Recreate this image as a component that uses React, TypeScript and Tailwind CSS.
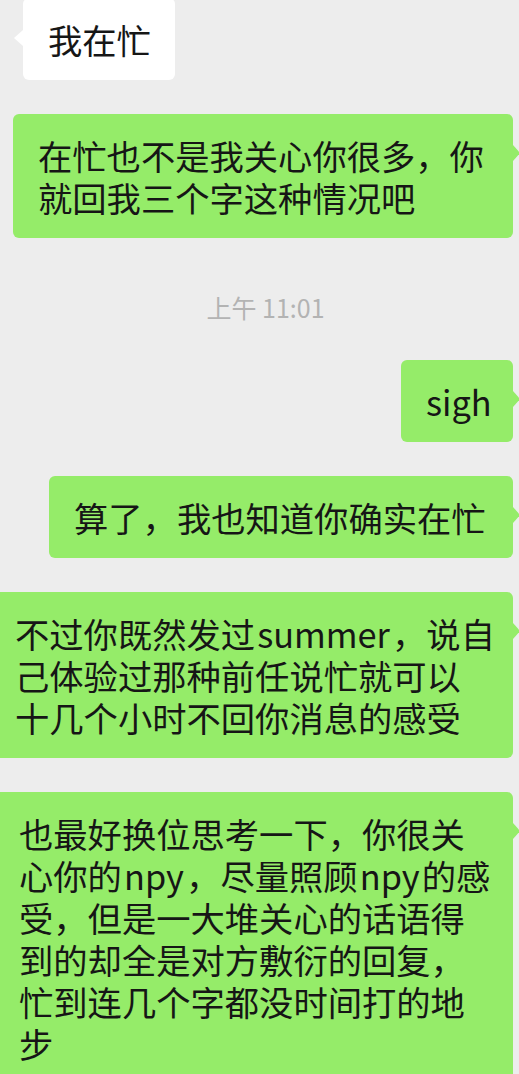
import React from 'react';

type Msg =
  | { kind: 'in'; lines: string[]; width: string }
  | { kind: 'out'; lines: string[]; width: string }
  | { kind: 'time'; text: string };

// \u200a = hair space, gives the small gap iOS puts between latin and chinese
const messages: Msg[] = [
  { kind: 'in', lines: ['我在忙'], width: 'w-[152px]' },
  { kind: 'out', lines: ['在忙也不是我关心你很多，你', '就回我三个字这种情况吧'], width: 'w-[500px]' },
  { kind: 'time', text: '上午 11:01' },
  { kind: 'out', lines: ['sigh'], width: 'w-[112px]' },
  { kind: 'out', lines: ['算了，我也知道你确实在忙'], width: 'w-[464px]' },
  {
    kind: 'out',
    lines: ['不过你既然发过\u200asummer\u200a，说自', '己体验过那种前任说忙就可以', '十几个小时不回你消息的感受'],
    width: 'w-[523px]',
  },
  {
    kind: 'out',
    lines: [
      '也最好换位思考一下，你很关',
      '心你的\u200anpy\u200a，尽量照顾\u200anpy\u200a的感',
      '受，但是一大堆关心的话语得',
      '到的却全是对方敷衍的回复，',
      '忙到连几个字都没时间打的地',
      '步',
    ],
    width: 'w-[519px]',
  },
];

function Bubble({ lines, width, incoming }: { lines: string[]; width: string; incoming: boolean }) {
  return (
    <div
      className={`relative shrink-0 rounded-md px-[25px] pt-5 pb-5 text-[34.3px] leading-[42px] text-[#161616] whitespace-nowrap ${width} ${
        incoming ? 'bg-white' : 'bg-[#95EC69]'
      }`}
    >
      <p>
        {lines.map((l, i) => (
          <React.Fragment key={i}>
            {i > 0 && <br />}
            {l}
          </React.Fragment>
        ))}
      </p>
      {/* little tail */}
      {incoming ? (
        <span className="absolute left-[-9px] top-[32px] w-0 h-0 border-y-[8px] border-y-transparent border-r-[9px] border-r-white" />
      ) : (
        <span className="absolute right-[-7px] top-[31px] w-0 h-0 border-y-[8px] border-y-transparent border-l-[7px] border-l-[#95EC69]" />
      )}
    </div>
  );
}

export default function App() {
  return (
    <main className="w-[519px] h-[1074px] overflow-hidden bg-[#EDEDED] font-['Noto_Sans_CJK_SC',sans-serif] flex flex-col items-end pr-[6px]">
      {messages.map((m, i) => {
        if (m.kind === 'time') {
          return (
            <div key={i} className="self-stretch mt-[54px] pl-[18px] text-center text-[25px] leading-[30px] text-[#B3B3B3]">
              {m.text}
            </div>
          );
        }
        const first = i === 0;
        const afterTime = messages[i - 1]?.kind === 'time';
        const mt = first ? 'mt-[-2px]' : afterTime ? 'mt-[38px]' : 'mt-[34px]';
        return (
          <div key={i} className={`${mt} ${m.kind === 'in' ? 'self-start ml-[23px]' : ''}`}>
            <Bubble lines={m.lines} width={m.width} incoming={m.kind === 'in'} />
          </div>
        );
      })}
    </main>
  );
}
